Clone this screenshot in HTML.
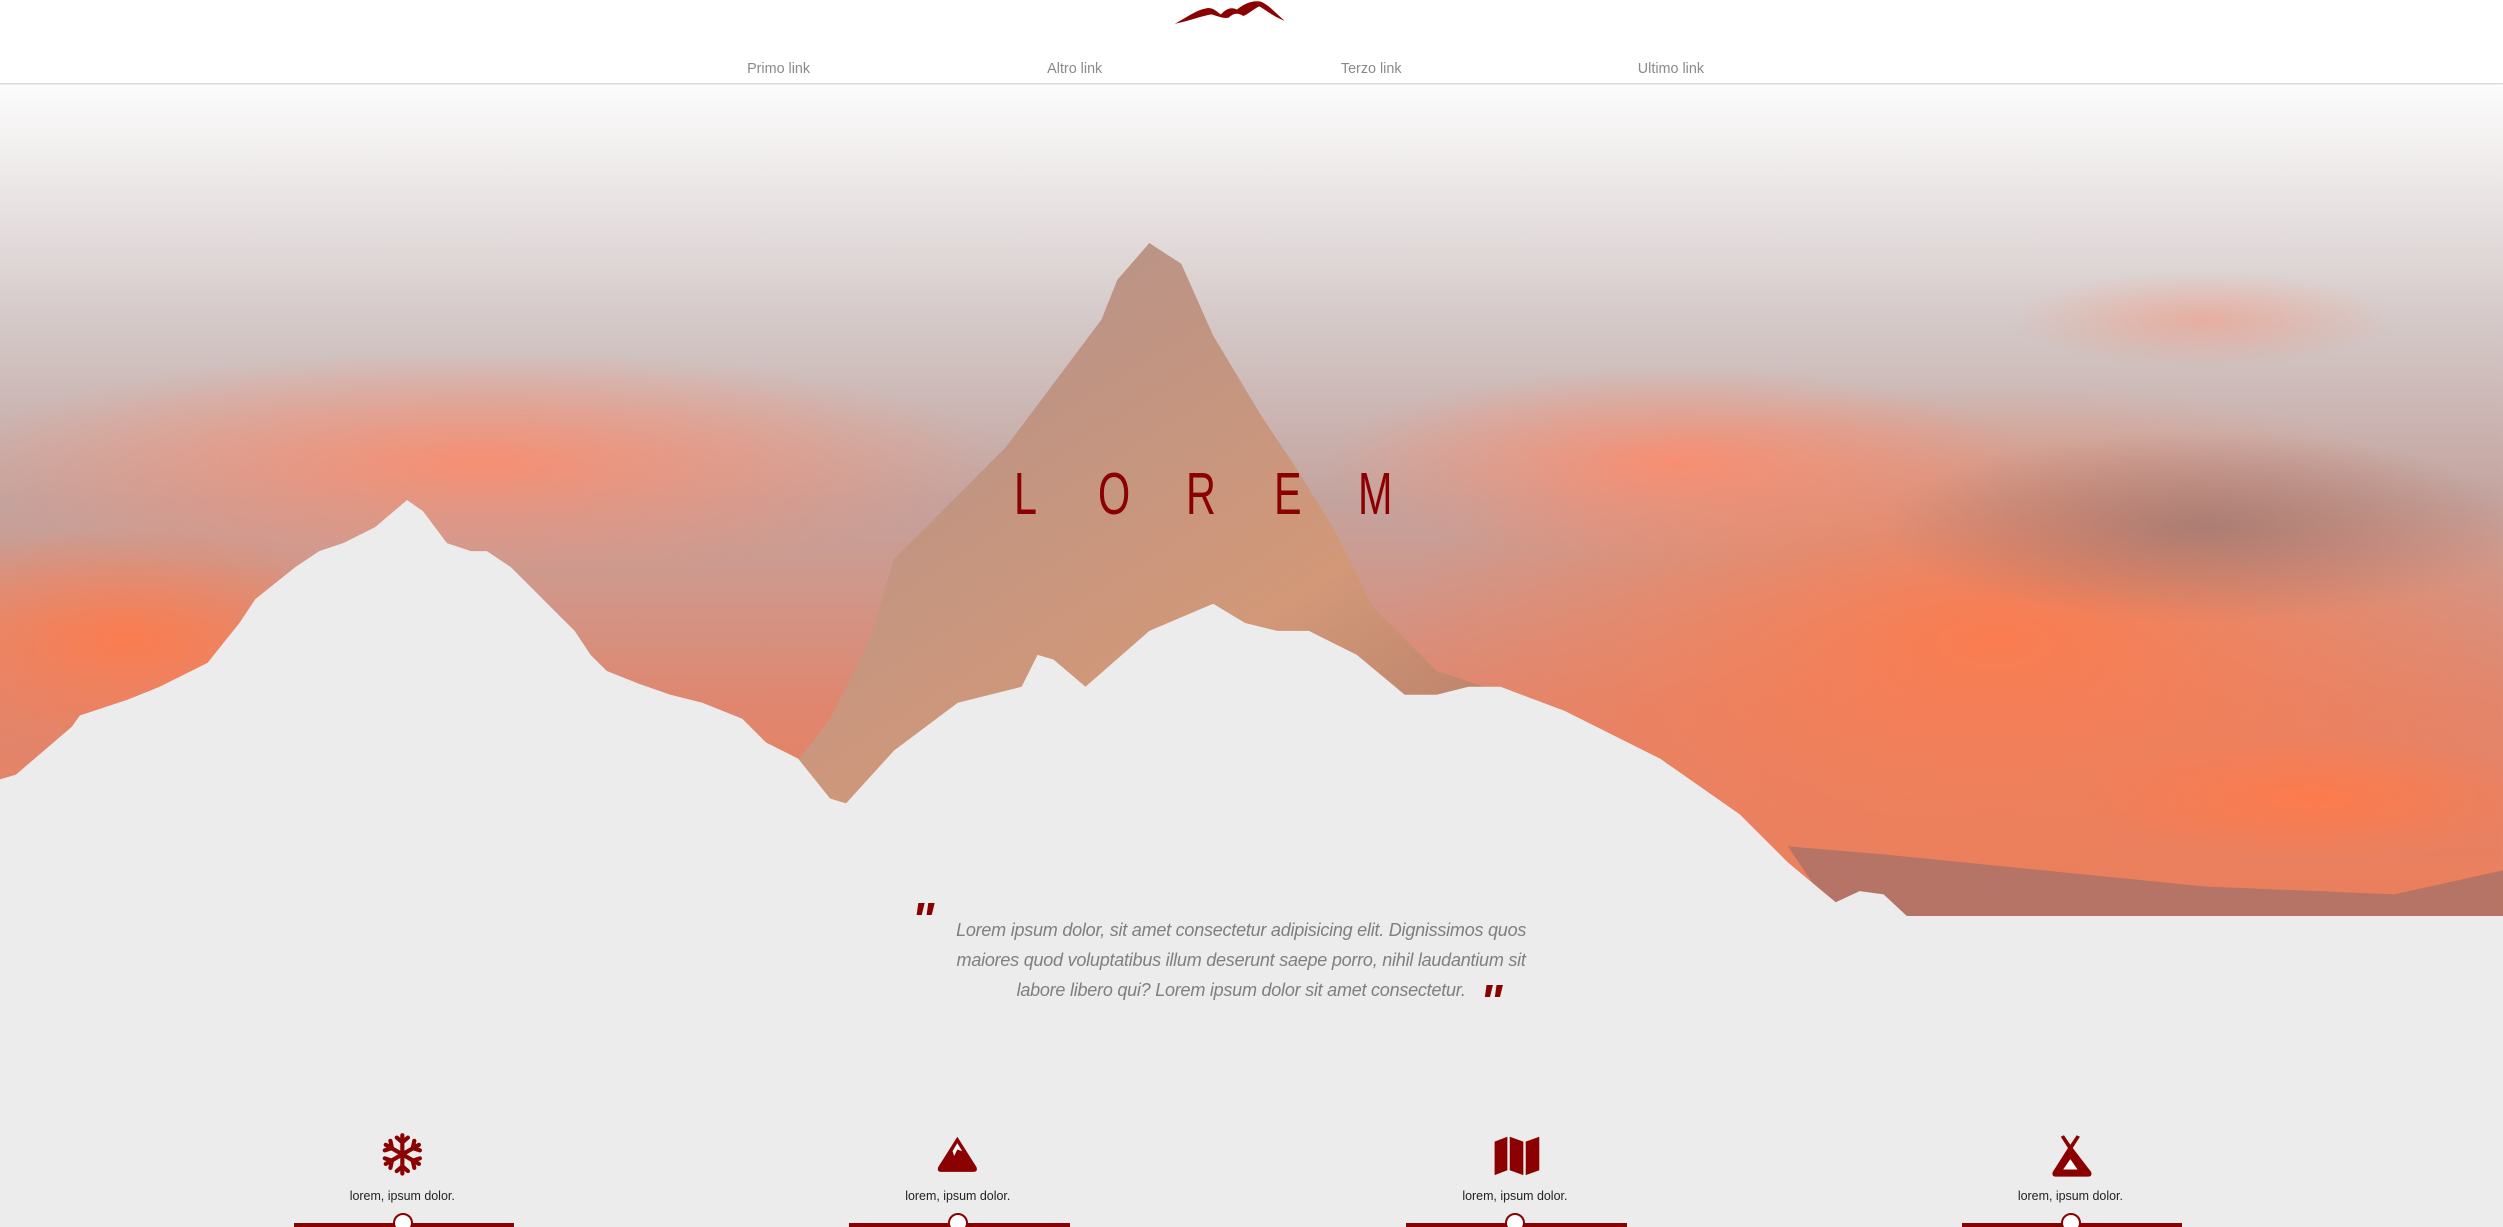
<!DOCTYPE html>
<html><head><meta charset="utf-8">
<style>
html,body{margin:0;padding:0;background:#ececec;overflow:hidden;width:2503px;height:1227px}
#w{width:1568px;height:769px;position:relative;zoom:1.5963;font-family:"Liberation Sans",sans-serif;background:#ececec;overflow:hidden}
.hdr{position:absolute;left:0;top:0;width:1568px;height:52px;background:#fff;border-bottom:1px solid #ddd}
.nav{position:absolute;top:38px;font-size:9px;color:#8a8a8a}
.title{position:absolute;left:633px;top:288px;font-size:37px;color:#8b0000;letter-spacing:0;}
.title span{position:absolute;top:0;display:inline-block;transform:scaleX(.7);transform-origin:left}
.q{position:absolute;left:585px;top:573px;width:385px;text-align:center;font-style:italic;font-size:11.3px;line-height:19px;color:#7f7f7f;letter-spacing:-.15px}
.qm{position:absolute;color:#8b0000;font-style:italic;font-weight:bold;font-size:30px;font-family:"Liberation Sans",sans-serif;line-height:30px}
.f{position:absolute;top:706px;width:140px;text-align:center}
.f .lab{position:absolute;top:39px;left:0;width:140px;font-size:7.8px;color:#222}
.f .ln{position:absolute;top:60px;left:2px;width:138px;height:2.5px;background:#8b0000}
.f .dot{position:absolute;top:54px;left:64px;width:10px;height:10px;border-radius:50%;background:#fff;border:1.5px solid #8b0000}
.f svg{position:absolute;left:56px;top:3px}
</style></head><body><div id="w">
<svg style="position:absolute;left:0;top:53px" width="1568" height="521" viewBox="0 53 1568 521">
<defs>
<linearGradient id="sky" x1="0" y1="0" x2="0" y2="1">
<stop offset="0" stop-color="#fcfcfc"/><stop offset=".12" stop-color="#ece7e7"/><stop offset=".3" stop-color="#d2c6c5"/><stop offset=".5" stop-color="#c4a39e"/><stop offset=".75" stop-color="#e0866e"/><stop offset="1" stop-color="#ec7e5a"/>
</linearGradient>
<radialGradient id="o1" cx=".5" cy=".5" r=".5"><stop offset="0" stop-color="#ff8a6a" stop-opacity=".85"/><stop offset="1" stop-color="#ff8a6a" stop-opacity="0"/></radialGradient>
<radialGradient id="o2" cx=".5" cy=".5" r=".5"><stop offset="0" stop-color="#ff7a4a" stop-opacity=".9"/><stop offset="1" stop-color="#ff7a4a" stop-opacity="0"/></radialGradient>
<radialGradient id="g1" cx=".5" cy=".5" r=".5"><stop offset="0" stop-color="#8a7070" stop-opacity=".6"/><stop offset="1" stop-color="#8a7070" stop-opacity="0"/></radialGradient>
<linearGradient id="mt" x1="0" y1="0" x2="1" y2="1"><stop offset="0" stop-color="#b0918d"/><stop offset=".5" stop-color="#d29878"/><stop offset="1" stop-color="#9a6058"/></linearGradient>
</defs>
<rect x="0" y="53" width="1568" height="521" fill="url(#sky)"/>
<ellipse cx="300" cy="290" rx="330" ry="70" fill="url(#o1)"/>
<ellipse cx="80" cy="400" rx="180" ry="70" fill="url(#o2)"/>
<ellipse cx="1250" cy="400" rx="380" ry="160" fill="url(#o2)"/>
<ellipse cx="1050" cy="290" rx="220" ry="60" fill="url(#o1)"/>
<ellipse cx="1380" cy="330" rx="200" ry="60" fill="url(#g1)"/>
<ellipse cx="1450" cy="500" rx="150" ry="40" fill="url(#o2)"/>
<ellipse cx="1380" cy="200" rx="120" ry="30" fill="url(#o1)" opacity=".5"/>
<polygon fill="url(#mt)" points="720,152 740,165 760,210 790,260 810,290 835,330 860,380 900,420 960,440 1000,460 1045,478 1100,530 1160,572 500,572 497,480 520,450 545,400 560,350 600,310 630,280 660,240 690,200 700,175"/>
<polygon fill="#b57465" points="1120,530 1180,535 1280,545 1380,555 1500,560 1568,545 1568,574 1150,574"/>
<polygon fill="#ececec" points="0,488 10,485 45,455 50,448 80,438 100,430 130,415 150,390 160,375 185,355 200,345 215,340 235,330 255,313 265,320 280,340 295,345 305,345 320,355 335,370 350,385 360,395 370,410 380,420 400,428 420,435 440,440 465,450 480,465 500,475 520,500 530,503 560,470 600,440 640,430 650,410 660,413 680,430 720,395 760,378 780,390 800,395 820,395 850,410 880,435 900,435 920,430 940,430 980,445 1040,475 1090,510 1120,540 1150,565 1165,558 1180,560 1195,574 0,574"/>
</svg>
<div class="hdr"></div>
<svg style="position:absolute;left:735px;top:0" width="72" height="17" viewBox="0 0 72 17"><path d="M1 15 C10 10 15 6 22 5 C26 5 28 8 30 9 C33 6 36 4 40 6 C45 2 50 0 55 1 C60 3 64 8 70 13 C62 10 58 6 54 4 C50 6 47 9 44 10 C41 8 38 8 35 11 C32 12 28 10 24 9 C18 10 10 13 1 15 Z" fill="#8b0000"/></svg>
<div class="nav" style="left:468px">Primo link</div>
<div class="nav" style="left:656px">Altro link</div>
<div class="nav" style="left:840px">Terzo link</div>
<div class="nav" style="left:1026px">Ultimo link</div>
<div class="title"><span style="left:2px">L</span><span style="left:55px">O</span><span style="left:110px">R</span><span style="left:165px">E</span><span style="left:218px">M</span></div>
<div class="qm" style="left:571px;top:562px">"</div>
<div class="qm" style="left:927px;top:613px">"</div>
<div class="q">Lorem ipsum dolor, sit amet consectetur adipisicing elit. Dignissimos quos maiores quod voluptatibus illum deserunt saepe porro, nihil laudantium sit labore libero qui? Lorem ipsum dolor sit amet consectetur.</div>

<div class="f" style="left:182px"><svg width="28" height="28" viewBox="0 0 28 28" stroke="#8b0000" stroke-width="2.6" stroke-linecap="round" fill="none"><path d="M14 2V26M3.6 8 24.4 20M3.6 20 24.4 8M10.5 3.5 14 6.5 17.5 3.5M10.5 24.5 14 21.5 17.5 24.5M3 11.5 7.5 10 6.5 5.5M21.5 22.5 20.5 18 25 16.5M3 16.5 7.5 18 6.5 22.5M21.5 5.5 20.5 10 25 11.5"/></svg><div class="lab">lorem, ipsum dolor.</div><div class="ln"></div><div class="dot"></div></div>
<div class="f" style="left:530px"><svg width="28" height="28" viewBox="0 0 28 28"><path d="M14 3 L26 22 Q27 25 24 25 H4 Q1 25 2 22 Z" fill="#8b0000"/><path d="M14 7 L17 12 L14 11 L12 15 L11 12 Z" fill="#fff"/></svg><div class="lab">lorem, ipsum dolor.</div><div class="ln"></div><div class="dot"></div></div>
<div class="f" style="left:879px"><svg width="32" height="28" viewBox="0 0 32 28"><path d="M1 6 L9 3 V24 L1 27 Z M10.5 3 L19 6 V27 L10.5 24 Z M20.5 6 L29 3 V24 L20.5 27 Z" fill="#8b0000"/></svg><div class="lab">lorem, ipsum dolor.</div><div class="ln"></div><div class="dot"></div></div>
<div class="f" style="left:1227px"><svg width="32" height="30" viewBox="0 0 32 30"><path d="M10 2 L14 8 L18 2 L20 3 L15.5 10 L27 25 Q28 28 25 28 H5 Q2 28 3 25 L12.5 10 L8 3 Z" fill="#8b0000"/><path d="M14 17 L18.5 23.5 H9.5 Z" fill="#fff"/></svg><div class="lab">lorem, ipsum dolor.</div><div class="ln"></div><div class="dot"></div></div>
</div></body></html>
